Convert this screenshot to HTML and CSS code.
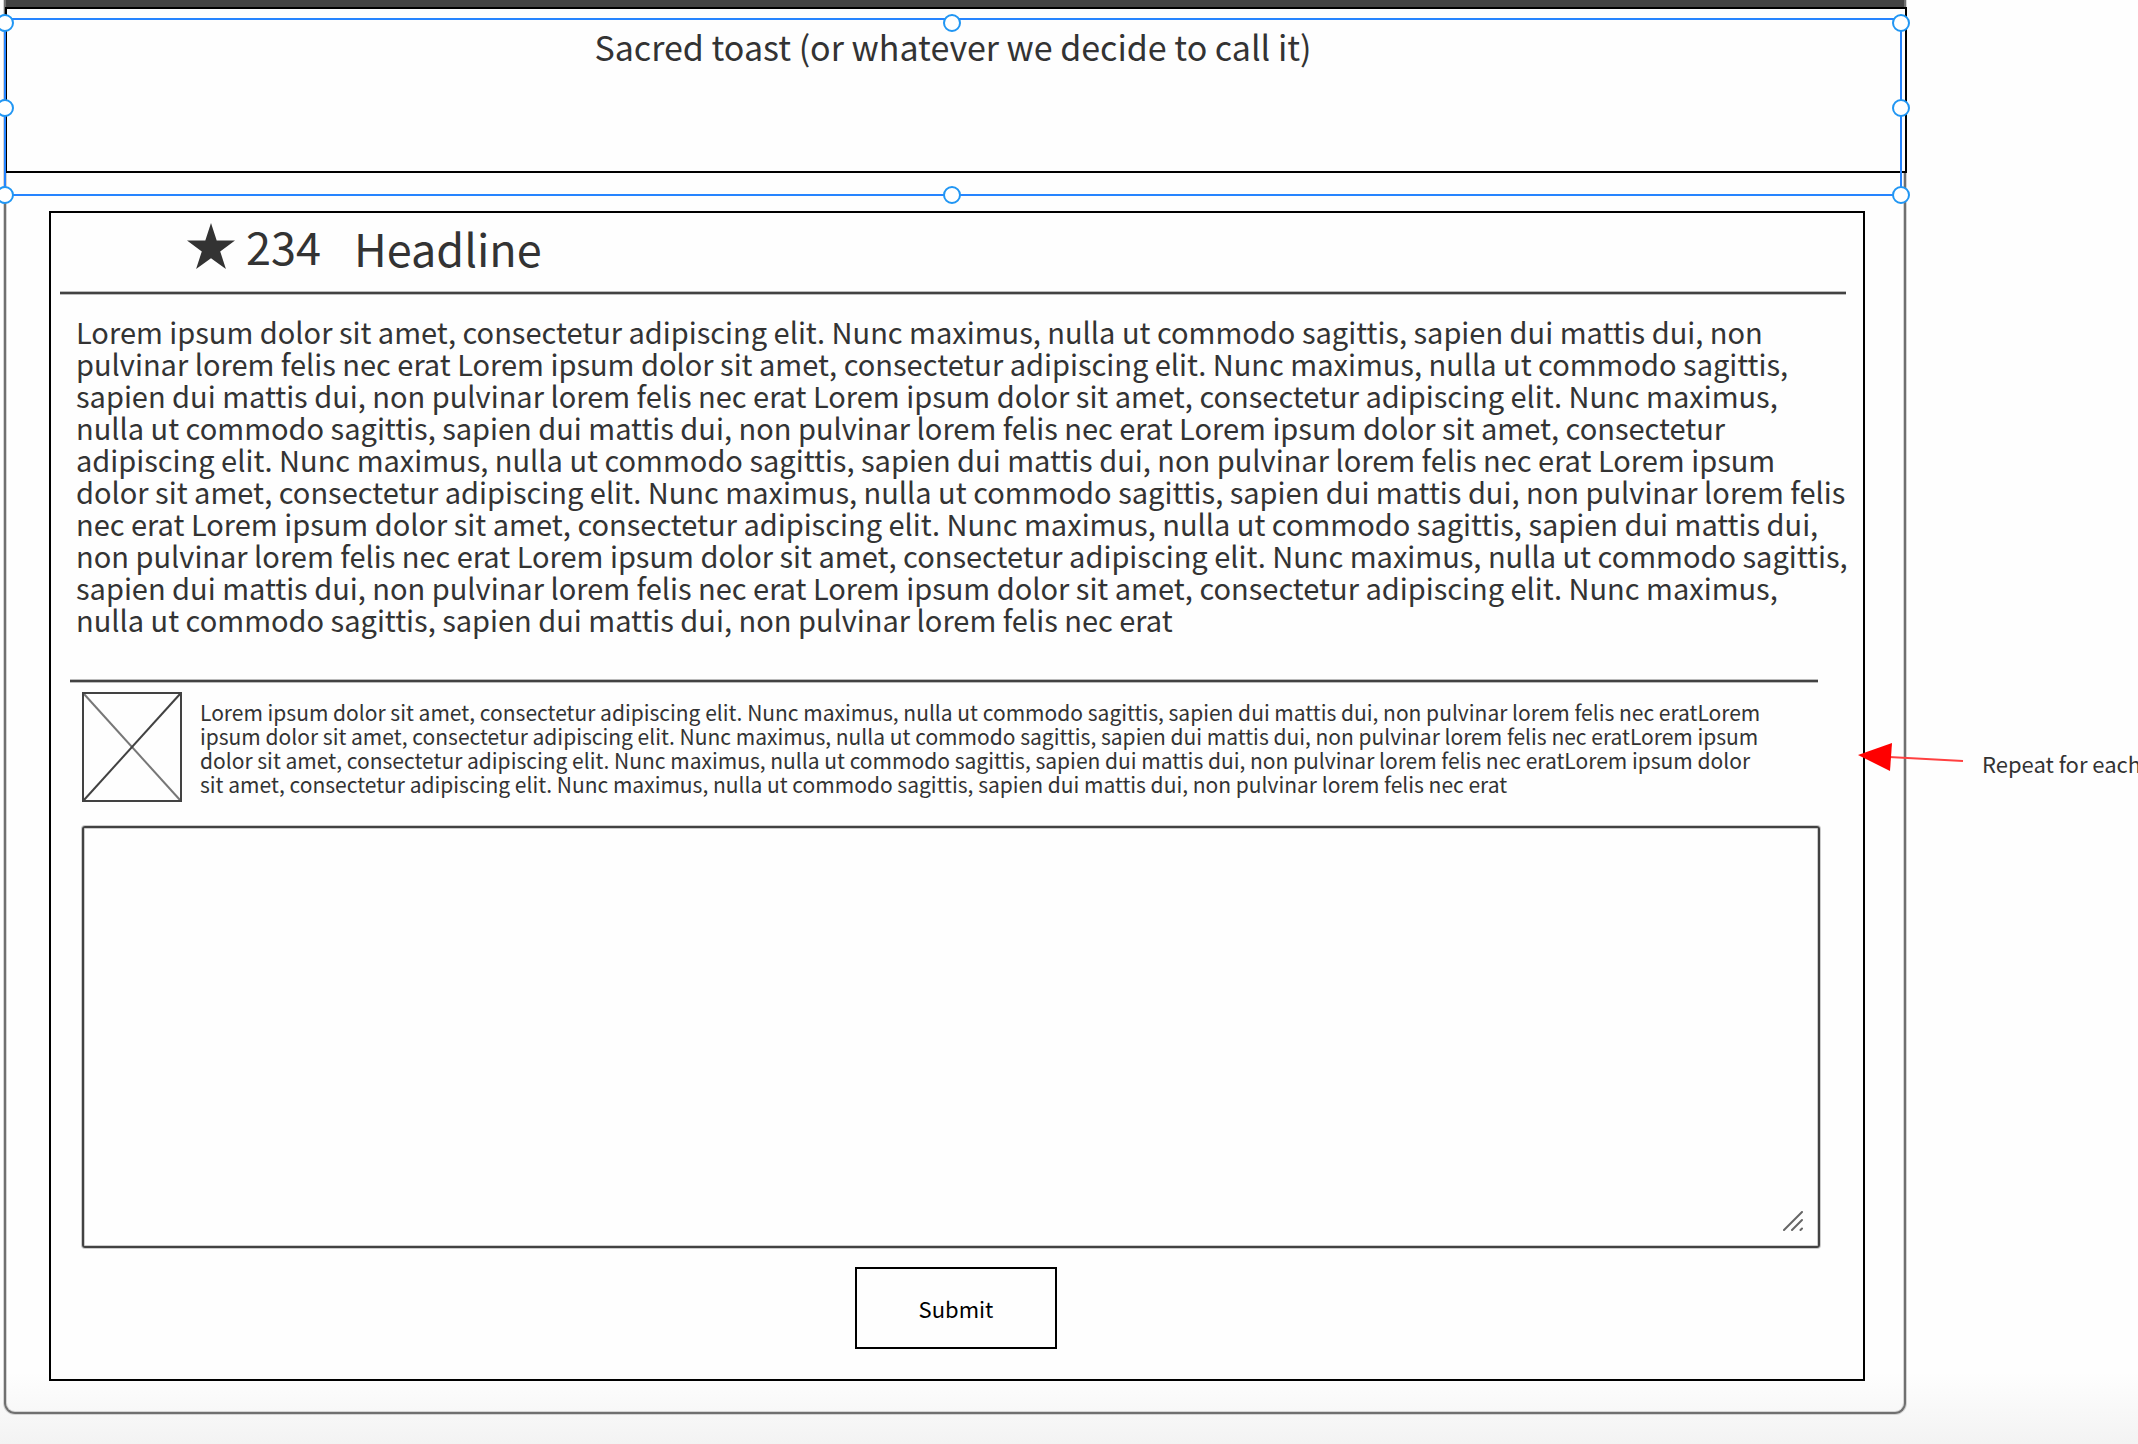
FILE: index.html
```html
<!DOCTYPE html>
<html lang="en">
<head>
<meta charset="utf-8">
<title>Sacred toast wireframe</title>
<link rel="stylesheet" href="styles.css">
</head>
<body>
<div class="canvas">
  <main class="frame">
    <div class="topbar"></div>
    <header class="toast">
      <h1 class="toast-title">Sacred toast (or whatever we decide to call it)</h1>
      <div class="selection">
        <span class="handle top left"></span>
        <span class="handle top center"></span>
        <span class="handle top right"></span>
        <span class="handle middle left"></span>
        <span class="handle middle right"></span>
        <span class="handle bottom left"></span>
        <span class="handle bottom center"></span>
        <span class="handle bottom right"></span>
      </div>
    </header>
    <article class="card">
      <div class="card-head">
        <svg class="star" viewBox="0 0 48 46" aria-hidden="true"><path d="M24 0 29.7 17.5H48L33.200 28.400 38.900 46 24 35.200 9.100 46 14.800 28.400 0 17.500H18.300Z"/></svg>
        <span class="score">234</span>
        <h2 class="headline">Headline</h2>
      </div>
      <hr class="rule rule-head">
      <p class="copy">Lorem ipsum dolor sit amet, consectetur adipiscing elit. Nunc maximus, nulla ut commodo sagittis, sapien dui mattis dui, non<br>
        pulvinar lorem felis nec erat Lorem ipsum dolor sit amet, consectetur adipiscing elit. Nunc maximus, nulla ut commodo sagittis,<br>
        sapien dui mattis dui, non pulvinar lorem felis nec erat Lorem ipsum dolor sit amet, consectetur adipiscing elit. Nunc maximus,<br>
        nulla ut commodo sagittis, sapien dui mattis dui, non pulvinar lorem felis nec erat Lorem ipsum dolor sit amet, consectetur<br>
        adipiscing elit. Nunc maximus, nulla ut commodo sagittis, sapien dui mattis dui, non pulvinar lorem felis nec erat Lorem ipsum<br>
        dolor sit amet, consectetur adipiscing elit. Nunc maximus, nulla ut commodo sagittis, sapien dui mattis dui, non pulvinar lorem felis<br>
        nec erat Lorem ipsum dolor sit amet, consectetur adipiscing elit. Nunc maximus, nulla ut commodo sagittis, sapien dui mattis dui,<br>
        non pulvinar lorem felis nec erat Lorem ipsum dolor sit amet, consectetur adipiscing elit. Nunc maximus, nulla ut commodo sagittis,<br>
        sapien dui mattis dui, non pulvinar lorem felis nec erat Lorem ipsum dolor sit amet, consectetur adipiscing elit. Nunc maximus,<br>
        nulla ut commodo sagittis, sapien dui mattis dui, non pulvinar lorem felis nec erat</p>
      <hr class="rule rule-comment">
      <section class="comment">
        <svg class="avatar" viewBox="0 0 100 110" role="img" aria-label="Avatar placeholder">
          <path class="cross-back" d="M2 2 98 108"/>
          <path class="cross-front" d="M98 2 2 108"/>
          <rect x="1" y="1" width="98" height="108"/>
        </svg>
        <p class="comment-text">Lorem ipsum dolor sit amet, consectetur adipiscing elit. Nunc maximus, nulla ut commodo sagittis, sapien dui mattis dui, non pulvinar lorem felis nec eratLorem<br>
          ipsum dolor sit amet, consectetur adipiscing elit. Nunc maximus, nulla ut commodo sagittis, sapien dui mattis dui, non pulvinar lorem felis nec eratLorem ipsum<br>
          dolor sit amet, consectetur adipiscing elit. Nunc maximus, nulla ut commodo sagittis, sapien dui mattis dui, non pulvinar lorem felis nec eratLorem ipsum dolor<br>
          sit amet, consectetur adipiscing elit. Nunc maximus, nulla ut commodo sagittis, sapien dui mattis dui, non pulvinar lorem felis nec erat</p>
      </section>
      <form class="reply">
        <div class="reply-box">
          <textarea class="reply-input" aria-label="Comment"></textarea>
          <svg class="grip" viewBox="0 0 20 20" aria-hidden="true"><path d="M1 19 19 1M9 19 19 9M17.500 19 19 17.500"/></svg>
        </div>
        <button class="submit" type="submit">Submit</button>
      </form>
    </article>
  </main>
  <aside class="note">
    <svg class="arrow" viewBox="0 0 108 30" aria-hidden="true"><path class="shaft" d="M32 14 106 18"/><path class="tip" d="M1 12 35 0 33 28Z"/></svg>
    <span>Repeat for each</span>
  </aside>
</div>
</body>
</html>
```
FILE: styles.css
```css
* { box-sizing: border-box; }

body {
  margin: 0;
  min-height: 100vh;
  overflow-x: hidden;
  color: #333;
  background: linear-gradient(to top, #f3f3f3, #fefefe 72px) #fefefe;
  font-family: "Noto Sans CJK SC", "Open Sans", sans-serif;
}

h1, h2, p { margin: 0; font-weight: 400; }

.canvas {
  display: flex;
  padding: 0 0 30px 4px;
}

/* Outer frame of the mocked screen */
.frame {
  flex: 1;
  min-width: 0;
  padding-bottom: 31px;
  border: 2px solid #707070;
  border-top: 0;
  border-radius: 0 0 11px 11px;
  box-shadow: 0 0 0 1px #d4d4d4, inset 0 0 0 1px #d4d4d4;
}

.topbar { height: 7px; background: #434343; }

.toast {
  position: relative;
  height: 166px;
  margin: 0 -3px 0 -1px;
  padding: 14px 6px 0 0;
  border: 2px solid #000;
  background: #fefefe;
}

.toast-title {
  font-size: 34px;
  line-height: 48px;
  text-align: center;
}

/* Selection overlay with its eight handles */
.selection {
  position: absolute;
  inset: 9px 3px -25px -3px;
  border: 2px solid #2684ff;
}

.handle {
  position: absolute;
  width: 18px;
  height: 18px;
  border: 2px solid #2196f3;
  border-radius: 50%;
  background: #fff;
}
.handle.top { top: -6px; }
.handle.middle { top: 79px; }
.handle.bottom { bottom: -10px; }
.handle.left { left: -10px; }
.handle.center { left: calc(50% - 10px); }
.handle.right { right: -10px; }

.card {
  margin: 38px 39px 0 43px;
  padding-bottom: 30px;
  border: 2px solid #000;
}

.card-head {
  display: flex;
  align-items: center;
  height: 78px;
  padding: 0 0 12px 136px;
}
.star { width: 48px; height: 46px; fill: #333; }
.score, .headline {
  font-size: 45px;
  line-height: 64px;
}
.score { margin-left: 11px; }
.headline { margin-left: 33px; padding-top: 4px; }

.rule {
  height: 4px;
  border: solid #bbb;
  border-width: 1px 0;
  background: #424242;
}
.rule-head { margin: 0 17px 0 9px; }
.rule-comment { margin: 44px 45px 0 19px; }

.copy {
  margin: 20px 8px 0 25px;
  font-size: 29px;
  line-height: 32px;
}

.comment {
  display: flex;
  gap: 18px;
  margin: 9px 43px 0 31px;
}
.avatar { flex: none; width: 100px; height: 110px; fill: none; stroke: #424242; stroke-width: 2; }
.cross-back { stroke: #777; }
.comment-text {
  padding-top: 8px;
  font-size: 21px;
  line-height: 24px;
}

.reply {
  display: flex;
  flex-direction: column;
  align-items: center;
  gap: 19px;
  margin: 24px 2px 0 0;
}
.reply-box {
  position: relative;
  align-self: stretch;
  margin: 0 41px 0 31px;
}
.reply-input {
  display: block;
  width: 100%;
  height: 422px;
  padding: 12px;
  border: 2px solid #424242;
  border-radius: 3px;
  outline: 0;
  box-shadow: 0 0 0 1px #ccc, inset 0 0 0 1px #ccc;
  background: none;
  resize: none;
  font: inherit;
}
.grip {
  position: absolute;
  right: 17px;
  bottom: 17px;
  width: 20px;
  height: 20px;
  fill: none;
  stroke: #666;
  stroke-width: 2;
  stroke-linecap: round;
}

.submit {
  width: 202px;
  height: 82px;
  border: 2px solid #000;
  background: none;
  color: #000;
  font: 22px/24px "Noto Sans CJK SC", "Open Sans", sans-serif;
}

/* Red arrow and margin note */
.note {
  position: relative;
  flex: none;
  width: 232px;
  padding: 751px 0 0 76px;
  font-size: 22px;
  line-height: 24px;
  white-space: nowrap;
}
.arrow {
  position: absolute;
  top: 743px;
  left: -49px;
  width: 108px;
  height: 30px;
}
.shaft { stroke: #ff4040; stroke-width: 2; }
.tip { fill: #f00; }
```
